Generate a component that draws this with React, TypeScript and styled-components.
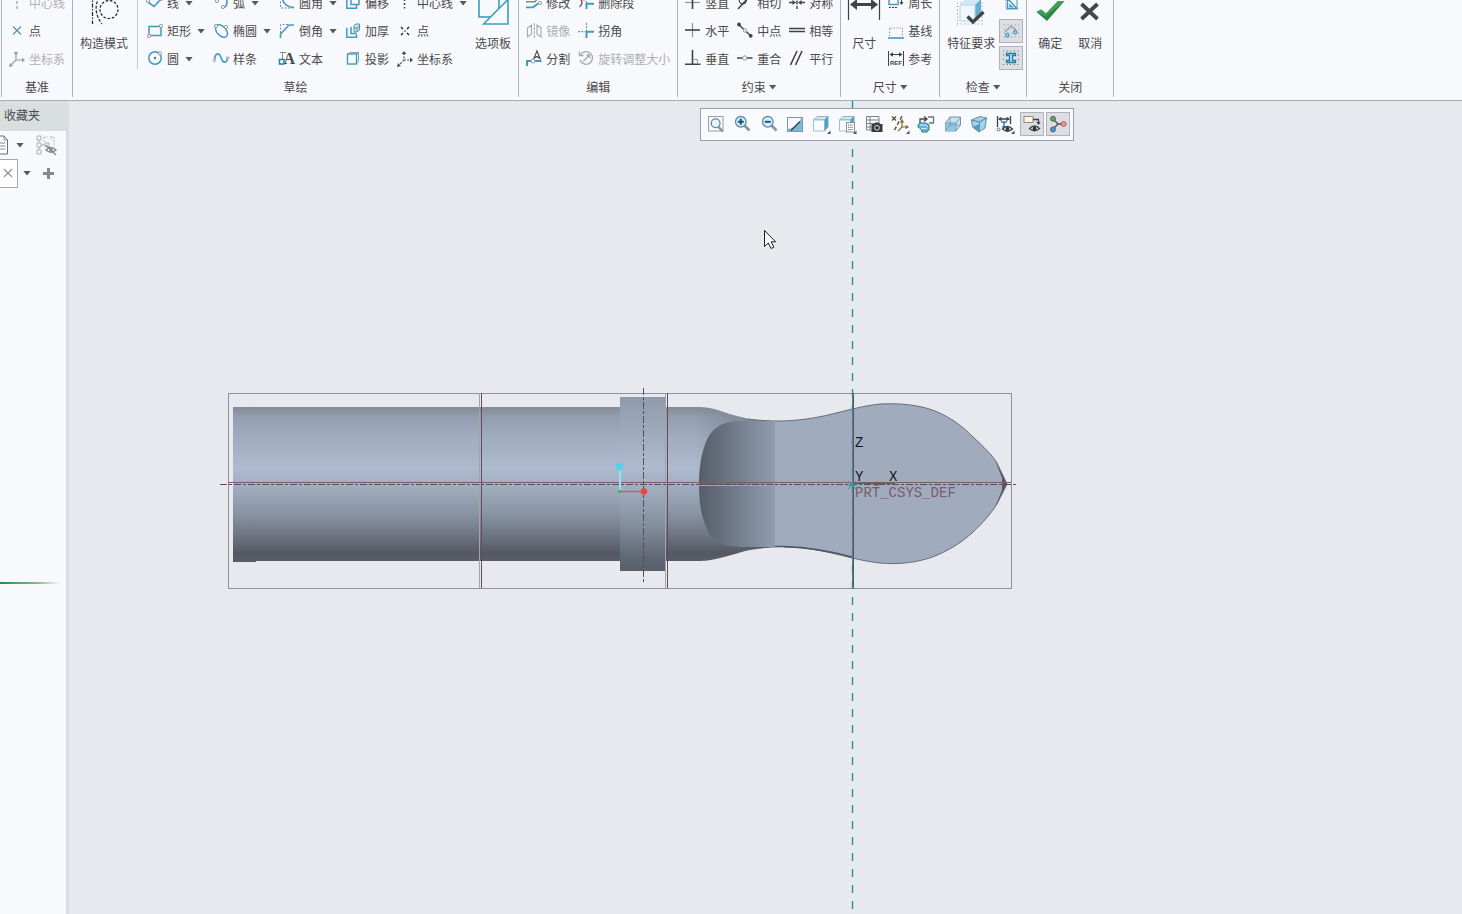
import React, { ReactNode } from "react";
import styled, { createGlobalStyle, css } from "styled-components";

const BLUE = "#3f9ac0";
const DARK = "#3f4246";
const GREY = "#a5a8ad";

const GlobalStyle = createGlobalStyle`
  *, *::before, *::after { box-sizing: border-box; }
  html, body { margin: 0; height: 100%; }
  body {
    font-family: "Noto Sans CJK SC", "Liberation Sans", sans-serif;
    font-size: 12px;
    line-height: 16px;
    color: #4a4a4c;
    background: #e8e9ef;
    overflow: hidden;
  }
  button {
    font: inherit;
    color: inherit;
    padding: 0;
    margin: 0;
    border: 0;
    background: none;
    white-space: nowrap;
  }
`;

const Page = styled.div`
  display: flex;
  flex-direction: column;
  height: 100vh;
`;

const Ribbon = styled.header`
  display: flex;
  align-items: flex-end;
  height: 101px;
  padding: 0 0 3px 1px;
  overflow: hidden;
  background: #f8f9fd;
  border-bottom: 1px solid #a9abb3;
`;

const Group = styled.section`
  display: flex;
  flex: none;
  flex-direction: column;
  padding: 0 7px;
  border-right: 1px solid #aeb0b8;
  &:first-child { border-left: 1px solid #aeb0b8; }
`;

const GroupBody = styled.div`
  display: flex;
  gap: 8px;
  height: 84px;
`;

const GroupTitle = styled.h2`
  display: flex;
  align-items: center;
  justify-content: center;
  gap: 3px;
  height: 24px;
  margin: 0;
  padding-top: 4px;
  font-size: 12px;
  font-weight: 400;
`;

const Column = styled.div`
  display: flex;
  flex-direction: column;
`;

const Separator = styled.div`
  width: 1px;
  height: 80px;
  margin: 0 1px;
  background: #c3c5cb;
`;

const Command = styled.button`
  display: flex;
  align-items: center;
  gap: 4px;
  height: 28px;
  &:disabled { color: #adafb4; }
`;

const BigCommand = styled.button`
  display: flex;
  flex-direction: column;
  align-items: center;
  justify-content: flex-start;
  gap: 9px;
  min-width: 32px;
  padding-top: 5px;
`;

const ToggleColumn = styled.div`
  display: flex;
  flex-direction: column;
  gap: 3px;
  margin: 3px -4px 0;
`;

const pressed = css`
  background: #dddee4;
  border: 1px solid #b0b2ba;
`;

const Toggle = styled.button<{ $on?: boolean }>`
  display: grid;
  place-items: center;
  width: 24px;
  height: 24px;
  ${(p) => p.$on && pressed}
`;

const Glyph = styled.svg<{ $size: number }>`
  display: block;
  flex: none;
  width: ${(p) => p.$size}px;
  height: ${(p) => p.$size}px;
  overflow: visible;
  fill: none;
`;

const Arrow = styled.span<{ $gap?: number }>`
  width: 8px;
  height: 5px;
  margin-left: ${(p) => p.$gap ?? 0}px;
  background: #55575b;
  clip-path: polygon(0 0, 100% 0, 50% 100%);
`;

const Workspace = styled.div`
  display: flex;
  flex: 1;
  min-height: 0;
`;

const Sidebar = styled.aside`
  flex: none;
  width: 69px;
  background: #f8f9fc;
  border-right: 3px solid #d9dde0;
`;

const SideTab = styled.button`
  display: block;
  width: 69px;
  height: 30px;
  padding: 0 0 2px 4px;
  text-align: left;
  background: #d9dedf;
`;

const SideRow = styled.div`
  display: flex;
  align-items: center;
  height: 28px;
`;

const IconButton = styled.button<{ $left?: number }>`
  display: grid;
  place-items: center;
  margin-left: ${(p) => p.$left ?? 0}px;
`;

const ClearButton = styled.button`
  display: grid;
  place-items: center;
  width: 18px;
  height: 29px;
  padding-right: 2px;
  background: #fff;
  border: solid #a4a7ae;
  border-width: 1px 1px 1px 0;
`;

const InsertMark = styled.div`
  width: 60px;
  height: 2px;
  margin-top: 395px;
  background: linear-gradient(90deg, #2c8a3c, #7fba83 60%, rgba(200, 225, 203, 0));
`;

const Canvas = styled.main`
  position: relative;
  flex: 1;
  min-width: 0;
  background: #e8e9ef;
`;

const Scene = styled.svg`
  display: block;
  width: 100%;
  height: 100%;
`;

const ViewBar = styled.div`
  position: absolute;
  top: 7px;
  left: 631px;
  display: flex;
  align-items: center;
  justify-content: space-between;
  width: 374px;
  height: 33px;
  padding: 0 3px 2px;
  background: #f9fafd;
  border: 1px solid #9c9ea7;
`;

const dot = (x: number, y: number, r = 1.6) => (
  <circle cx={x} cy={y} r={r} fill="#f8f9fd" stroke="#8b9aa5" strokeWidth="1" />
);

const axes = (color: string, dash?: string) => (
  <g stroke={color} strokeWidth="1.2">
    <path d="M7 2V9H15M7 9L1 15" strokeDasharray={dash} />
    <path d="M7 0L4.6 3H9.4ZM16 9L13 6.6V11.4ZM0 16L1 12L4 15Z" fill={color} stroke="none" />
  </g>
);

const small: Record<string, ReactNode> = {
  axisGrey: <path d="M8 0V4M8 6V9M8 11V14" stroke={GREY} strokeWidth="1.4" />,
  pointBlue: <path d="M4 3.5L12 11.5M12 3.5L4 11.5" stroke="#5a93b3" strokeWidth="1.3" />,
  csysGrey: axes("#9a9ca1"),
  line: (
    <>
      <path d="M1 7L7 11.5L14 4" stroke={BLUE} strokeWidth="1.6" />
      {dot(1, 6)}
      {dot(14, 4)}
    </>
  ),
  rect: (
    <>
      <rect x="2" y="3.5" width="12" height="9" stroke={BLUE} strokeWidth="1.5" />
      {dot(14, 3)}
      {dot(2, 13)}
    </>
  ),
  circle: (
    <>
      <circle cx="8" cy="7" r="6.2" stroke={BLUE} strokeWidth="1.5" />
      <circle cx="8" cy="7" r="1.2" fill="#5c6f7b" />
      {dot(13, 2.5)}
    </>
  ),
  arc: (
    <>
      <path d="M5 4Q14 0 14 6Q14 11 11 12.5" stroke={BLUE} strokeWidth="1.6" />
      {dot(4, 6)}
      {dot(10, 12)}
    </>
  ),
  ellipse: (
    <>
      <ellipse cx="8.5" cy="8" rx="7.4" ry="4.6" transform="rotate(48 8.5 8)" stroke={BLUE} strokeWidth="1.5" />
      {dot(3, 3)}
      {dot(13, 4)}
    </>
  ),
  spline: (
    <>
      <path d="M1.5 8.5C2 2.5 6 0.5 8 6.5C10 13.5 14 11.5 14.5 7.5" stroke={BLUE} strokeWidth="1.7" />
      {dot(1.5, 9.5, 1.2)}
      {dot(14.7, 7, 1.2)}
    </>
  ),
  fillet: (
    <>
      <path d="M1.5 3V13H14" stroke="#85878b" strokeDasharray="2 1.5" />
      <path d="M3 3Q5 12 15 12.5" stroke={BLUE} strokeWidth="1.6" />
    </>
  ),
  chamfer: (
    <>
      <path d="M1.5 10V1.5H9" stroke="#85878b" strokeDasharray="2 1.5" />
      <path d="M1.5 15V11L10 2H15" stroke={BLUE} strokeWidth="1.6" />
    </>
  ),
  text: (
    <>
      <path d="M1 1.5H7M3.5 2V8" stroke="#85878b" />
      <text x="4.5" y="13" fontFamily="Liberation Serif, serif" fontWeight="700" fontSize="16" fill="#444649">A</text>
      <rect x="0.5" y="8.5" width="4.5" height="4.5" fill="#fff" stroke="#1f83ae" strokeWidth="1.5" />
    </>
  ),
  offset: <path d="M6 2V9.5H14V2M1.8 2V13.2H11.5V10" stroke={BLUE} strokeWidth="1.5" />,
  thicken: (
    <>
      <path d="M6 4V10.5H11M1.8 5V14.2H11.5V11" stroke={BLUE} strokeWidth="1.5" />
      <path d="M9 2.5L11 1H14.5V7L12 9H9Z" fill="#cfe4f0" stroke="#5790ac" />
      <path d="M9 5H12V9M12 5L14 3" stroke="#5790ac" />
    </>
  ),
  project: (
    <>
      <path d="M3 3L5 1.5H13.5V10L12 12M12 3L13.5 1.5" stroke="#8f9ba5" />
      <rect x="2.5" y="3" width="9" height="10" fill="#fbfdff" stroke={BLUE} strokeWidth="1.4" />
    </>
  ),
  axisDark: <path d="M7.5 -1V2M7.5 4V6M7.5 8V10M7.5 12V13.5" stroke={DARK} strokeWidth="1.5" />,
  pointDark: (
    <path d="M4 4L6 6M10 10L12 12M12 4L10 6M6 10L4 12M7.4 8H8.6" stroke="#222" strokeWidth="1.4" />
  ),
  csysDark: axes("#46484c", "2 1.4"),
  modify: (
    <>
      <path d="M0 6.7H9L13 2" stroke="#85878b" strokeWidth="1.4" />
      <path d="M0 12.3H7L13 8" stroke={BLUE} strokeWidth="1.8" />
      {dot(14, 8)}
    </>
  ),
  deleteSegment: (
    <>
      <path d="M1.5 3Q6.5 7.5 1.5 12" stroke="#8b4752" strokeWidth="1.4" />
      <path d="M6 6V1M8.5 8V2" stroke="#85878b" strokeDasharray="2 1" />
      <path d="M8.5 14V8.7H16" stroke={BLUE} strokeWidth="2" />
    </>
  ),
  mirror: (
    <g stroke={GREY} strokeWidth="1.1">
      <path d="M8.3 0V15" strokeDasharray="3 1" />
      <path d="M1.5 5L5.5 2V11L1.5 14ZM15 5L11 2V11L15 14Z" />
    </g>
  ),
  corner: (
    <>
      <path d="M8.5 0V8M0 8.7H7" stroke="#85878b" strokeWidth="1.2" strokeDasharray="2 1.2" />
      <path d="M8.5 15V8.7H16" stroke={BLUE} strokeWidth="2" />
    </>
  ),
  divide: (
    <>
      <path d="M1 15V10H15.5" stroke={BLUE} strokeWidth="2" />
      {dot(7, 10, 2)}
      <path d="M11 0L8 7L11 5.5L14 7.5Z" fill="#fff" stroke={DARK} strokeWidth="1.1" />
    </>
  ),
  rotateResize: (
    <g stroke={GREY} strokeWidth="1.3">
      <path d="M2.6 3.6A6.4 6.4 0 1 1 2 9" />
      <path d="M1.5 0.5V4.5H5.5M5 10.5L11 4.5M8.5 4H11.5V7" />
    </g>
  ),
  vertical: (
    <>
      <path d="M0 7.5H15" stroke="#8e9094" strokeWidth="1.2" />
      <path d="M7.5 0V14" stroke={DARK} strokeWidth="1.6" />
    </>
  ),
  horizontal: (
    <>
      <path d="M7.5 0V14" stroke="#8e9094" strokeWidth="1.2" />
      <path d="M0 7H15" stroke={DARK} strokeWidth="1.6" />
    </>
  ),
  perpendicular: (
    <>
      <path d="M9 8.5H12.5V12" stroke="#8e9094" />
      <path d="M7.5 -1V13M0 13.2H15.5" stroke={DARK} strokeWidth="1.6" />
    </>
  ),
  tangent: (
    <>
      <circle cx="5.8" cy="5.2" r="3.6" stroke={DARK} strokeWidth="1.2" />
      <path d="M1 14L12 2" stroke={DARK} strokeWidth="1.5" />
    </>
  ),
  midpoint: (
    <>
      <path d="M2 2L14 13" stroke={DARK} strokeWidth="1.4" />
      <circle cx="2" cy="1.5" r="1.9" fill={DARK} />
      <circle cx="13.7" cy="12.8" r="1.9" fill={DARK} />
      {dot(8, 7.5, 1.7)}
    </>
  ),
  coincident: (
    <>
      <path d="M0 7H15.5" stroke={DARK} strokeWidth="1.5" />
      {dot(7.8, 7, 2.2)}
    </>
  ),
  symmetric: (
    <>
      <path d="M8 0V14" stroke={DARK} strokeWidth="1.4" strokeDasharray="4 1.5" />
      <path d="M0 7.5H5M16 7.5H11" stroke={DARK} strokeWidth="1.4" />
      <path d="M7 7.5L3.5 5V10ZM9 7.5L12.5 5V10Z" fill={DARK} />
    </>
  ),
  equal: <path d="M0 5.5H16M0 8.5H16" stroke={DARK} strokeWidth="1.4" />,
  parallel: <path d="M1.5 14L8 0M6.5 14L13 0" stroke={DARK} strokeWidth="1.6" />,
  perimeter: (
    <>
      <rect x="1" y="2" width="9" height="7.5" stroke={BLUE} strokeWidth="1.4" />
      <path d="M1 12.5H10M13.5 2V9" stroke={DARK} strokeDasharray="2 1" />
      <path d="M13.5 10L11.5 7H15.5Z" fill={DARK} />
    </>
  ),
  baseline: (
    <>
      <path d="M1.5 13V5H14.5V13" stroke="#8e9094" strokeDasharray="1.5 1.5" />
      <path d="M0 15H16" stroke={BLUE} strokeWidth="1.6" />
    </>
  ),
  reference: (
    <>
      <path d="M0.5 0V15M15.5 0V15M3 3.5H13" stroke={DARK} />
      <path d="M1.5 3.5L5 1.2V5.8ZM14.5 3.5L11 1.2V5.8Z" fill={DARK} />
      <text x="8" y="14" textAnchor="middle" fontFamily="Liberation Sans, sans-serif" fontWeight="700" fontSize="6" fill={DARK}>REF</text>
    </>
  ),
  setSquare: (
    <>
      <path d="M3 1V13H15" stroke="#8e9094" strokeDasharray="1.5 1.5" />
      <path d="M4.5 2.5L14 12.5H4.5ZM7 8V10.5H10" stroke={BLUE} strokeWidth="1.4" />
      <path d="M4 1.5H14V12" stroke="#5790ac" />
    </>
  ),
  openEnds: (
    <>
      <path d="M1 2H16M1 6H16M1 10H16M1 14H16" stroke="#7f93ad" strokeDasharray="1 2.6" />
      <path d="M2 9L8 3L13 7" stroke="#9599a2" strokeWidth="1.1" />
      <circle cx="4.3" cy="12.3" r="1.8" fill="#9bd0ea" stroke="#3d84ab" />
      <circle cx="12.3" cy="9.3" r="1.8" fill="#9bd0ea" stroke="#3d84ab" />
    </>
  ),
  beam: (
    <>
      <path d="M0 1H16M0 5H2M15 5H16M0 9.5H2M15 9.5H16M0 14.5H16" stroke="#4c6383" strokeDasharray="1 2.6" />
      <path d="M3.5 3.5H12.5V5.5H9.5V10.5H12.5V12.5H3.5V10.5H6.5V5.5H3.5Z" fill="#b9e6f6" stroke="#1e7ca8" strokeWidth="1.3" />
    </>
  ),
};

const big: Record<string, ReactNode> = {
  construction: (
    <g stroke="#222" strokeWidth="1.2">
      <path d="M4.5 1V30" strokeDasharray="4 1.5 1.5 1.5" />
      <path d="M11 3Q4 17 14 30" strokeDasharray="3 1.6" />
      <circle cx="21" cy="15.5" r="9" strokeDasharray="2.6 1.7" />
    </g>
  ),
  palette: (
    <g stroke={BLUE} strokeWidth="1.6">
      <rect x="2" y="1" width="20" height="22" />
      <path d="M6.5 30L31 5.5V30Z" fill="#f8fbfe" />
    </g>
  ),
  dimension: (
    <>
      <path d="M0.5 2V26M31.5 2V26" stroke={DARK} strokeWidth="1.2" />
      <path d="M5 10.5H27" stroke={DARK} strokeWidth="3" />
      <path d="M2 10.5L9 5V16ZM30 10.5L23 5V16Z" fill={DARK} />
    </>
  ),
  feature: (
    <>
      <path d="M2 9H30M2 12.5H30M2 16H30M2 19.5H30M2 23H30M2 26.5H30M2 30H30" stroke="#7b8da0" strokeDasharray="1 2.5" />
      <path d="M5 11L11 5H26L20 11Z" fill="#cfe8f4" />
      <path d="M20 11L26 5V20L20 27Z" fill="#5fb0d2" />
      <path d="M5 11H20V27H5Z" fill="#eef7fb" stroke="#b5d6e6" />
      <path d="M12.5 22.5L18 28L28.5 18" stroke={DARK} strokeWidth="3.2" />
    </>
  ),
  ok: (
    <>
      <path d="M2.5 18L7 15.5L12 19.5L24 7H30.5L13 27Z" fill="#2b8744" />
      <path d="M2.5 18L7 15.5L12 19.5L24 7H30.5L12 22Z" fill="#44a058" />
    </>
  ),
  cancel: <path d="M7.5 10L23.5 25M23.5 10L7.5 25" stroke="#454648" strokeWidth="3.8" />,
};

const lens = (
  <>
    <path d="M11.5 10.5L16.5 15.5" stroke="#8d9097" strokeWidth="2.6" />
    <circle cx="7.8" cy="6.8" r="5.3" fill="#d9eef7" stroke="#5c8ca3" strokeWidth="1.3" />
  </>
);
const flyout = <path d="M18.5 15.5V19H15Z" fill="#4a4c50" />;
const box = (
  <>
    <path d="M1.5 5L5 1.5H16L12.5 5Z" fill="#cfe6f1" stroke="#7aa7bd" strokeWidth="0.8" />
    <path d="M12.5 5L16 1.5V12L12.5 16Z" fill="#4ba3cb" stroke="#6c9db5" strokeWidth="0.8" />
    <path d="M1.5 5H12.5V16H1.5Z" fill="#f8fcfe" stroke="#8aaebf" strokeWidth="0.8" />
  </>
);
const eye = (x: number, y: number) => (
  <g transform={`translate(${x} ${y})`}>
    <path d="M-5 0Q0 -5 5 0Q0 4.5 -5 0Z" fill="#f0f1f4" stroke="#3c3e42" strokeWidth="1.2" />
    <circle r="1.9" fill="#333" />
  </g>
);

const view: { name: string; on?: boolean; art: ReactNode }[] = [
  {
    name: "重新调整",
    art: (
      <>
        <rect x="1.5" y="1.5" width="14.5" height="14.5" stroke="#9a9ca2" />
        <path d="M11 11.5L16 16.5" stroke="#8d9097" strokeWidth="2.4" />
        <circle cx="8.6" cy="8.2" r="4.4" fill="#e6f3f9" stroke="#5c8ca3" strokeWidth="1.3" />
      </>
    ),
  },
  { name: "放大", art: <>{lens}<path d="M4.8 6.8H10.8M7.8 3.8V9.8" stroke="#175a78" strokeWidth="2" /></> },
  { name: "缩小", art: <>{lens}<path d="M4.8 6.8H10.8" stroke="#175a78" strokeWidth="2" /></> },
  {
    name: "重画",
    art: (
      <>
        <rect x="1.5" y="2.5" width="15" height="14" fill="#7db9d3" stroke="#7f97a4" />
        <path d="M2 3H15Q13 12 2 14Z" fill="#f2f8fb" />
        <path d="M5 15.5L14 6.5" stroke="#2e4a58" strokeWidth="1.6" />
      </>
    ),
  },
  { name: "显示样式", art: <>{box}{flyout}</> },
  {
    name: "已保存方向",
    art: (
      <>
        {box}
        <rect x="8.5" y="7.5" width="8" height="9.5" fill="#fbfbfd" stroke="#8d8f94" />
        <path d="M10 10H15M10 12.3H15M10 14.6H15" stroke="#707277" strokeDasharray="1.4 0.8" />
        {flyout}
      </>
    ),
  },
  {
    name: "视图管理器",
    art: (
      <>
        <path d="M1.5 1.5H14V15H1.5ZM1.5 5H14M1.5 8.5H14M1.5 12H14M5 1.5V15" stroke="#808287" />
        <path d="M6.5 9H9L10 7.5H14L15 9H17.5V17H6.5Z" fill="#37393c" />
        <circle cx="12" cy="12.8" r="2.4" fill="#37393c" stroke="#d8d9dc" />
      </>
    ),
  },
  {
    name: "基准显示",
    art: (
      <>
        <path d="M1 1.5L5 5.5M5 1.5L1 5.5" stroke="#5a4c30" strokeWidth="1.3" />
        <path d="M11 1L3 16" stroke="#6a5836" strokeWidth="1.5" strokeDasharray="4 2" />
        <path d="M11 6V12H16M11 12L7 16M9.5 7.5L11 5L12.5 7.5M14.5 10.5L17 12L14.5 13.5" stroke="#8a6a32" strokeWidth="1.2" />
        {flyout}
      </>
    ),
  },
  {
    name: "图层",
    art: (
      <>
        <path d="M3 9V4H9M7 1.5L10 4L7 6.5" stroke={DARK} strokeWidth="1.3" />
        <path d="M11 2H16.5V8H12" stroke="#707277" strokeWidth="1.3" />
        <path d="M1 10L3 8H9L12 10V15L10 17H5L4 14L1 12Z" fill="#67b2d4" stroke="#2f7da3" />
        <path d="M3 10H9L11 12M4 13.5H9.5" stroke="#d8eef7" />
      </>
    ),
  },
  {
    name: "透明",
    art: (
      <>
        <path d="M1.5 8L6 2H16.5V10L12 16H1.5Z" fill="#c4e2ef" stroke="#7d929e" />
        <path d="M1.5 8H12V16H1.5Z" fill="#8fc8e1" />
        <path d="M1.5 8H12L16.5 2M12 8V16M6 2V10H16.5M6 10L1.5 16" stroke="#6f9db2" strokeWidth="0.9" />
      </>
    ),
  },
  {
    name: "透视图",
    art: (
      <>
        <path d="M1.5 5L10 1.5L16.5 3L15 13L9 17L2.5 12Z" fill="#a4d2e6" stroke="#5e8ea5" />
        <path d="M1.5 5L9.5 7L16.5 3M9.5 7L9 17" stroke="#4a86a2" />
        <path d="M2.5 12L9.5 9L9 17Z" fill="#4b9dc2" />
      </>
    ),
  },
  {
    name: "注释显示",
    art: (
      <>
        <path d="M1.5 1V12M14.5 1V9M3 4H13" stroke={DARK} strokeWidth="1.3" />
        <path d="M2 4L5.5 1.8V6.2ZM14 4L10.5 1.8V6.2Z" fill={DARK} />
        <path d="M5 7H11M8 7V12M6 12H10" stroke="#2d7fa5" strokeWidth="1.5" />
        <circle cx="2.5" cy="14.5" r="1.5" stroke="#707277" />
        {eye(11.5, 14)}
        {flyout}
      </>
    ),
  },
  {
    name: "注释方向",
    on: true,
    art: (
      <>
        <rect x="1" y="1.5" width="9" height="6" fill="#fdf6ea" stroke="#9b8a70" />
        <path d="M10 4.5H15.5V8" stroke={DARK} strokeWidth="1.3" />
        <path d="M15.5 10L13.3 7H17.7Z" fill={DARK} />
        {eye(11.5, 13.5)}
      </>
    ),
  },
  {
    name: "旋转中心",
    on: true,
    art: (
      <>
        <path d="M4 4L9 9L4 14M9 9H14" stroke="#4b4d51" strokeWidth="1.4" />
        <circle cx="4" cy="3.8" r="2.5" fill="#679a72" stroke="#4c6f54" />
        <circle cx="4" cy="14.4" r="2.5" fill="#5c8fc4" stroke="#3d6894" />
        <circle cx="14.7" cy="9" r="2.5" fill="#e29a9a" stroke="#b35e62" />
      </>
    ),
  },
];

type Cmd = { icon: string; label: string; menu?: boolean; off?: boolean };

const Commands = ({ items }: { items: Cmd[] }) => (
  <Column>
    {items.map((c) => (
      <Command key={c.label} disabled={c.off}>
        <Glyph $size={16} viewBox="0 0 16 16" aria-hidden="true">{small[c.icon]}</Glyph>
        {c.label}
        {c.menu && <Arrow $gap={2} />}
      </Command>
    ))}
  </Column>
);

const Big = ({ icon, label }: { icon: string; label: string }) => (
  <BigCommand>
    <Glyph $size={32} viewBox="0 0 32 32" aria-hidden="true">{big[icon]}</Glyph>
    {label}
  </BigCommand>
);

const RibbonGroup = ({ title, menu, children }: { title: string; menu?: boolean; children: ReactNode }) => (
  <Group>
    <GroupBody>{children}</GroupBody>
    <GroupTitle>
      {title}
      {menu && <Arrow />}
    </GroupTitle>
  </Group>
);

const Model = () => (
  <Scene viewBox="69 101 1393 813" preserveAspectRatio="xMinYMin meet" role="img" aria-label="模型视图">
    <defs>
      <linearGradient id="shaft" gradientUnits="userSpaceOnUse" x1="0" y1="407" x2="0" y2="561">
        <stop offset="0" stopColor="#858b98" />
        <stop offset="0.07" stopColor="#939fb0" />
        <stop offset="0.2" stopColor="#a0adc0" />
        <stop offset="0.4" stopColor="#aebacf" />
        <stop offset="0.52" stopColor="#a0adbf" />
        <stop offset="0.7" stopColor="#8793a2" />
        <stop offset="0.86" stopColor="#686e7b" />
        <stop offset="0.95" stopColor="#545862" />
        <stop offset="1" stopColor="#595d69" />
      </linearGradient>
      <linearGradient id="collar" gradientUnits="userSpaceOnUse" x1="0" y1="397" x2="0" y2="571">
        <stop offset="0" stopColor="#8f9bab" />
        <stop offset="0.25" stopColor="#a2afc1" />
        <stop offset="0.4" stopColor="#aebacf" />
        <stop offset="0.55" stopColor="#9eabbc" />
        <stop offset="0.75" stopColor="#808c9b" />
        <stop offset="0.92" stopColor="#616875" />
        <stop offset="1" stopColor="#59606c" />
      </linearGradient>
      <linearGradient id="neck" gradientUnits="userSpaceOnUse" x1="695" y1="0" x2="745" y2="0">
        <stop offset="0" stopColor="#6f7987" stopOpacity="0" />
        <stop offset="1" stopColor="#6f7987" stopOpacity="0.55" />
      </linearGradient>
      <linearGradient id="pocket" gradientUnits="userSpaceOnUse" x1="699" y1="0" x2="775" y2="0">
        <stop offset="0" stopColor="#565d69" />
        <stop offset="0.3" stopColor="#66707d" />
        <stop offset="0.65" stopColor="#7b8796" />
        <stop offset="1" stopColor="#8f9cad" />
      </linearGradient>
    </defs>

    <rect x="228.5" y="393.5" width="783" height="195" stroke="#8f929c" fill="none" />
    <path d="M233 407H620V561H256V562H233Z" fill="url(#shaft)" />
    <path d="M665 407H700C716 407 730 416 750 419C762 421 775 421 784 421V547C775 547 762 548 750 550C732 554 716 561 700 561H665Z" fill="url(#shaft)" />
    <path d="M695 407H700C716 407 730 416 750 419C762 421 775 421 784 421V470H695Z" fill="url(#neck)" />
    <rect x="620" y="397" width="46" height="174" fill="url(#collar)" />

    <path
      d="M774 421H784C828 419 845 408 880 404C900 403 920 405 935 411C952 418 963 427 972 436C984 447 992 455 997 463L1007 484L997 504C992 512 984 522 972 533C963 541 952 549 935 556C920 562 900 565 880 563C845 559 828 548 784 547H774Z"
      fill="#a0acbe"
    />
    <path
      d="M748 419C762 421 775 421 784 421C828 419 845 408 880 404C900 403 920 405 935 411C952 418 963 427 972 436C984 447 992 455 997 463L1007 484L997 504C992 512 984 522 972 533C963 541 952 549 935 556C920 562 900 565 880 563C845 559 828 548 784 547"
      fill="none"
      stroke="#666c78"
    />
    <path d="M735 546.5H784C812 547.5 830 551 852 557" fill="none" stroke="#4f545f" strokeWidth="1.6" />
    <path d="M995 460L1007 484L995 507L1002 490V478Z" fill="#545a66" />
    <path d="M775 421H740C720 421 711 430 706 442C701 454 699 470 699 484C699 502 701 516 707 529C712 541 720 546 740 547H775Z" fill="url(#pocket)" />

    <g fill="none">
      <path d="M479.5 393V588M665.5 393V588" stroke="#a8a0ab" />
      <path d="M481.5 393V588M667.5 393V588M853.5 393V588" stroke="#664b58" />
      <path d="M228 482.5H1011" stroke="#7f5c68" />
      <path d="M690 485.5H1000" stroke="#b79da6" />
      <path d="M220 484.5H1017" stroke="#54505b" strokeDasharray="7 2 3 2" />
      <path d="M643.5 388V583" stroke="#54505b" strokeDasharray="7 2 3 2" />
      <path d="M853 483.5H895" stroke="#8a4c54" />
      <path d="M852.5 101V914" stroke="#2c8ca0" strokeWidth="1.4" strokeDasharray="8 8" />
      <path d="M852.5 393V588" stroke="#4d8794" strokeDasharray="12 4" />
      <path d="M847 485H857M848 481L856 489M856 481L848 489" stroke="#2c9a9d" />
    </g>
    <path d="M886 483.5L875 481.5V486Z" fill="#8a4c54" />

    <g>
      <path d="M620 467V491" stroke="#8fe3f2" strokeWidth="2" />
      <path d="M620 491.5H643" stroke="#e0524e" strokeWidth="1.4" />
      <path d="M616 463H623V468L620 471L616 468Z" fill="#4fd3ef" />
      <circle cx="644" cy="491.5" r="3.2" fill="#e8463f" />
      <rect x="618" y="490" width="3" height="3" fill="#4caf50" />
    </g>

    <g fontFamily="'Liberation Mono', monospace" fontSize="14">
      <text x="855" y="447" fill="#15161a">Z</text>
      <text x="855" y="481" fill="#15161a">Y</text>
      <text x="889" y="481" fill="#15161a">X</text>
      <text x="855" y="497" fill="#7a5b67">PRT_CSYS_DEF</text>
    </g>

    <path
      d="M764.5 230.5V246.5L768.3 243L771 248.5L773.8 247.2L771.2 241.8H775.6Z"
      fill="#fdfdfe"
      stroke="#1c1d20"
    />
  </Scene>
);

export default function App() {
  return (
    <Page>
      <GlobalStyle />
      <Ribbon>
        <RibbonGroup title="基准">
          <Commands
            items={[
              { icon: "axisGrey", label: "中心线", off: true },
              { icon: "pointBlue", label: "点" },
              { icon: "csysGrey", label: "坐标系", off: true },
            ]}
          />
        </RibbonGroup>
        <RibbonGroup title="草绘">
          <Big icon="construction" label="构造模式" />
          <Separator />
          <Commands
            items={[
              { icon: "line", label: "线", menu: true },
              { icon: "rect", label: "矩形", menu: true },
              { icon: "circle", label: "圆", menu: true },
            ]}
          />
          <Commands
            items={[
              { icon: "arc", label: "弧", menu: true },
              { icon: "ellipse", label: "椭圆", menu: true },
              { icon: "spline", label: "样条" },
            ]}
          />
          <Commands
            items={[
              { icon: "fillet", label: "圆角", menu: true },
              { icon: "chamfer", label: "倒角", menu: true },
              { icon: "text", label: "文本" },
            ]}
          />
          <Commands
            items={[
              { icon: "offset", label: "偏移" },
              { icon: "thicken", label: "加厚" },
              { icon: "project", label: "投影" },
            ]}
          />
          <Commands
            items={[
              { icon: "axisDark", label: "中心线", menu: true },
              { icon: "pointDark", label: "点" },
              { icon: "csysDark", label: "坐标系" },
            ]}
          />
          <Big icon="palette" label="选项板" />
        </RibbonGroup>
        <RibbonGroup title="编辑">
          <Commands
            items={[
              { icon: "modify", label: "修改" },
              { icon: "mirror", label: "镜像", off: true },
              { icon: "divide", label: "分割" },
            ]}
          />
          <Commands
            items={[
              { icon: "deleteSegment", label: "删除段" },
              { icon: "corner", label: "拐角" },
              { icon: "rotateResize", label: "旋转调整大小", off: true },
            ]}
          />
        </RibbonGroup>
        <RibbonGroup title="约束" menu>
          <Commands
            items={[
              { icon: "vertical", label: "竖直" },
              { icon: "horizontal", label: "水平" },
              { icon: "perpendicular", label: "垂直" },
            ]}
          />
          <Commands
            items={[
              { icon: "tangent", label: "相切" },
              { icon: "midpoint", label: "中点" },
              { icon: "coincident", label: "重合" },
            ]}
          />
          <Commands
            items={[
              { icon: "symmetric", label: "对称" },
              { icon: "equal", label: "相等" },
              { icon: "parallel", label: "平行" },
            ]}
          />
        </RibbonGroup>
        <RibbonGroup title="尺寸" menu>
          <Big icon="dimension" label="尺寸" />
          <Commands
            items={[
              { icon: "perimeter", label: "周长" },
              { icon: "baseline", label: "基线" },
              { icon: "reference", label: "参考" },
            ]}
          />
        </RibbonGroup>
        <RibbonGroup title="检查" menu>
          <Big icon="feature" label="特征要求" />
          <ToggleColumn>
            {["setSquare", "openEnds", "beam"].map((icon, i) => (
              <Toggle key={icon} $on={i > 0} aria-pressed={i > 0} aria-label={["重叠几何", "突出显示开放端", "着色封闭环"][i]}>
                <Glyph $size={16} viewBox="0 0 16 16" aria-hidden="true">{small[icon]}</Glyph>
              </Toggle>
            ))}
          </ToggleColumn>
        </RibbonGroup>
        <RibbonGroup title="关闭">
          <Big icon="ok" label="确定" />
          <Big icon="cancel" label="取消" />
        </RibbonGroup>
      </Ribbon>

      <Workspace>
        <Sidebar>
          <SideTab>收藏夹</SideTab>
          <SideRow>
            <IconButton aria-label="显示">
              <Glyph $size={16} viewBox="8 0 16 16" aria-hidden="true">
                <path d="M4 -1H12L15.5 3V17H4" fill="#fff" stroke="#6b6d72" />
                <path d="M12 -1V3H15.5M6 6H13.5M6 9H13.5M6 12H13.5" stroke="#8a8c91" />
              </Glyph>
            </IconButton>
            <IconButton aria-label="显示选项"><Arrow /></IconButton>
            <IconButton $left={12} aria-label="隐藏树项">
              <Glyph $size={20} viewBox="0 0 20 20" aria-hidden="true">
                <path d="M1 1H5V5H1ZM1 8H5V12H1ZM1 15H5V19H1ZM3 5V8M3 12V15M5 10H9M9 8H13V12H9Z" stroke="#adafb4" />
                <path d="M8 2H12M15 1V5M8 2V7M15 2H18V12" stroke="#b8babf" strokeDasharray="2 1" />
                <path d="M10 15Q15 10 20 15Q15 19.5 10 15Z" stroke="#828489" strokeWidth="1.3" />
                <circle cx="15" cy="15" r="1.8" fill="#828489" />
                <path d="M10 10L20 20" stroke="#828489" strokeWidth="1.2" />
              </Glyph>
            </IconButton>
          </SideRow>
          <SideRow>
            <ClearButton aria-label="清除">
              <Glyph $size={8} viewBox="0 0 8 8" aria-hidden="true">
                <path d="M0 0L8 8M8 0L0 8" stroke="#909298" strokeWidth="1.2" />
              </Glyph>
            </ClearButton>
            <IconButton $left={5} aria-label="筛选选项"><Arrow /></IconButton>
            <IconButton $left={12} aria-label="添加">
              <Glyph $size={11} viewBox="0 0 11 11" aria-hidden="true">
                <path d="M5.5 0V11M0 5.5H11" stroke="#85878c" strokeWidth="3" />
              </Glyph>
            </IconButton>
          </SideRow>
          <InsertMark />
        </Sidebar>
        <Canvas>
          <Model />
          <ViewBar role="toolbar" aria-label="视图">
            {view.map((v) => (
              <Toggle key={v.name} $on={v.on} aria-label={v.name}>
                <Glyph $size={18} viewBox="0 0 18 18" aria-hidden="true">{v.art}</Glyph>
              </Toggle>
            ))}
          </ViewBar>
        </Canvas>
      </Workspace>
    </Page>
  );
}
